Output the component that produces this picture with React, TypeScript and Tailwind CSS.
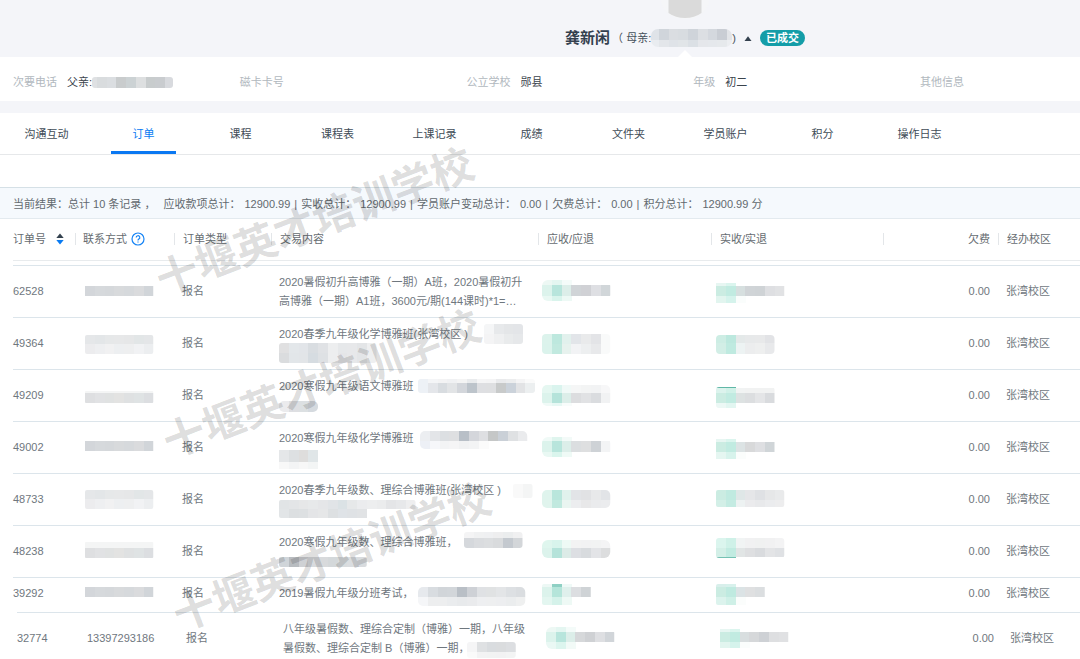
import { useId, useState } from "react";

type Strip = { y: number; h: number; c: string[]; x?: number };
type Block = { x: number; r?: number; strips: Strip[] };

const CELL = 9.75;

/* Pixelated cover that hides private details. */
function Mosaic({ block, w, h }: { block: Block; w: number; h: number }) {
  const id = useId();
  const top = Math.min(...block.strips.map((s) => s.y));
  const bottom = Math.max(...block.strips.map((s) => s.y + s.h));
  const cells = Math.max(...block.strips.map((s) => (s.x ?? 0) + s.c.length));
  return (
    <svg aria-hidden="true" width={w} height={h} className="pointer-events-none absolute top-0 left-0" shapeRendering="crispEdges">
      <clipPath id={id}>
        <rect x={block.x} y={top} width={cells * CELL} height={bottom - top} rx={block.r ?? 0} />
      </clipPath>
      <g clipPath={`url(#${id})`}>
        {block.strips.map((s, i) =>
          s.c.map((color, j) => (
            <rect key={`${i}-${j}`} x={block.x + ((s.x ?? 0) + j) * CELL} y={s.y} width={CELL + 0.3} height={s.h} fill={color} />
          )),
        )}
      </g>
    </svg>
  );
}

const PHONE_DARK = ["#d3d6da", "#d6d9dc", "#d5d8db", "#d8dadc", "#d6d9dc", "#dadbdd", "#d1d5d9"];
const PHONE_MID = ["#dedfe1", "#e1e2e4", "#e0e2e2", "#e3e3e2", "#dfe1e2", "#dfe3e4", "#dcdee1"];
const PHONE_TOP = ["#e5e7e9", "#e3e6e8", "#e6e8e9", "#e7e8e9", "#e6e7e8", "#e2e6e7", "#e4e6e8"];
const PHONE_LOW = ["#ececee", "#eeeff1", "#f1f1f2", "#edeff1", "#eeeff0", "#f1f2f4", "#eceef0"];

const dark = (y: number): Block => ({ x: 10, strips: [{ y, h: 10, c: PHONE_DARK }] });
const pair = (y: number): Block => ({
  x: 10,
  r: 2,
  strips: [
    { y, h: 9, c: PHONE_TOP },
    { y: y + 9, h: 10, c: PHONE_LOW },
  ],
});
const lowPhone = (y: number, h: number): Block => ({
  x: 10,
  r: 1,
  strips: [
    { y, h, c: Array(7).fill("#f4f5f5") },
    { y: y + h, h: 10, c: PHONE_MID },
  ],
});

type Order = {
  id: string;
  phone?: string;
  phoneCover?: Block;
  lines: string[];
  covers: Block[];
  due: Block;
  paid: Block;
  height: string;
};

const orders: Order[] = [
  {
    id: "62528",
    phoneCover: dark(20),
    lines: ["2020暑假初升高博雅（一期）A班，2020暑假初升", "高博雅（一期）A1班，3600元/期(144课时)*1=…"],
    covers: [],
    due: { x: 4, r: 6, strips: [
      { y: 14, h: 5, c: ["#edf8f4", "#e4f6f1", "#f4fbf9"] },
      { y: 19, h: 11, c: ["#dcf3ec", "#b8e5dc", "#dceee9", "#d0d4d7", "#d0d1d5", "#dedfe3", "#d1d6d9"] },
      { y: 30, h: 5, c: ["#e9f8f3", "#d9f4ec", "#edf9f5"] },
    ] },
    paid: { x: 5, strips: [
      { y: 17, h: 3, c: ["#e7f6f2", "#dbf5ee"] },
      { y: 20, h: 10, c: ["#cbece2", "#c1ebe1", "#d6dfdf", "#d0d4d7", "#cfd3d6", "#dedfe2", "#e1e2e4"] },
      { y: 30, h: 7, c: ["#e2f5ef", "#d5f3ec", "#fafdfc"] },
    ] },
    height: "h-[52px]",
  },
  {
    id: "49364",
    phoneCover: pair(17),
    lines: ["2020春季九年级化学博雅班(张湾校区 )"],
    covers: [
      { x: 213, r: 3, strips: [
        { y: 6, h: 10, c: ["#f5f6f7", "#e7e9eb", "#e4e6e8", "#e3e5e8"] },
        { y: 16, h: 10, c: ["#f4f4f5", "#eff0f1", "#e9ebec", "#e6e8ea"] },
      ] },
      { x: 8, r: 3, strips: [
        { y: 25, h: 10, c: ["#e0e0e1", "#e3e7ea", "#e2e5e9", "#d9dde1", "#e0e2e5", "#edeeef", "#e6e8ea", "#e7e8ea", "#e3e5e7", "#eeeff0"] },
        { y: 35, h: 10, c: ["#dadcde", "#e2e6e9", "#e2e5e8", "#d6dce1", "#dee1e4", "#edeeef", "#e5e6e8", "#e7e8ea", "#e3e5e7", "#eeeff0"] },
      ] },
    ],
    due: { x: 4, r: 4, strips: [
      { y: 16, h: 10, c: ["#dcf3ec", "#bde8de", "#e2f1ed", "#e2e5e9", "#e9eaeb", "#e3e4e7", "#f9fafa"] },
      { y: 26, h: 10, c: ["#dbf3ec", "#c1e9df", "#e7f2ee", "#f2f3f5", "#edeff0", "#e8e9eb", "#f9fafa"] },
    ] },
    paid: { x: 5, r: 4, strips: [
      { y: 17, h: 8, c: ["#cdede4", "#bce8de", "#e4e9e9", "#e7e9ea", "#e8e9ea", "#e2e3e6"] },
      { y: 25, h: 11, c: ["#d2eee6", "#bfeae0", "#edf3f3", "#ecedee", "#eeefef", "#e8e9eb"] },
    ] },
    height: "h-[52px]",
  },
  {
    id: "49209",
    phoneCover: lowPhone(21, 2),
    lines: ["2020寒假九年级语文博雅班"],
    covers: [
      { x: 147, r: 3, strips: [
        { y: 9, h: 4, c: ["#edf1f6", "#f4f5f7", "#f3f3f4", "#f0f1f3", "#f4f4f4", "#e9ebed", "#f5f5f6", "#f4f4f5", "#e9eaec", "#ecedee", "#f4f4f5", "#fafafa"] },
        { y: 13, h: 10, c: ["#edf1f6", "#e4e6ea", "#d8dce0", "#e2e4e6", "#d3d6db", "#bdc4cb", "#dedfe2", "#dedfe1", "#c8caca", "#cbd2da", "#e2e3e5", "#eceff0"] },
      ] },
      { x: 8, r: 5, strips: [{ y: 31, h: 11, c: ["#ebebed", "#dedfe2", "#dce0e2", "#d5dadf"] }] },
    ],
    due: { x: 4, r: 5, strips: [
      { y: 15, h: 8, c: ["#e5f7f1", "#daf4ee", "#f0f9f7", "#f5f6f6", "#f3f4f4", "#f2f3f4", "#f7f7f8"] },
      { y: 23, h: 10, c: ["#dcf3ec", "#b5e3da", "#dceee9", "#dcdddf", "#e1e2e4", "#dadcdf", "#f1f2f3"] },
      { y: 33, h: 3, c: ["#f0faf7", "#e7f8f4", "#f8fcfb"] },
    ] },
    paid: { x: 5, r: 3, strips: [
      { y: 17, h: 1, c: ["#60b7a7", "#60b7a7"] },
      { y: 18, h: 5, c: ["#dcf3ed", "#d1f1e8", "#f1f3f3", "#f1f2f2", "#f1f2f2", "#f1f2f2"] },
      { y: 23, h: 10, c: ["#cbece2", "#c1ebe1", "#dde2e2", "#dcdee0", "#e4e5e7", "#d9dbde"] },
      { y: 33, h: 5, c: ["#ecf8f5", "#e2f6f1"] },
    ] },
    height: "h-[52px]",
  },
  {
    id: "49002",
    phoneCover: dark(19),
    lines: ["2020寒假九年级化学博雅班"],
    covers: [
      { x: 149, r: 5, strips: [
        { y: 9, h: 10, c: ["#eceef1", "#e3e5e8", "#dcdfe2", "#dedfe1", "#b8bfc7", "#d4d6db", "#dedfe2", "#c5c7c7", "#cad0d7", "#dfe1e3", "#eaebed"] },
        { y: 19, h: 8, c: ["#edf0f6", "#f6f7fa", "#f3f4f5", "#f5f5f6", "#f1f2f3", "#f3f4f5", "#fbfbfb"] },
      ] },
      { x: 8, strips: [
        { y: 28, h: 12, c: ["#e5e7e9", "#dde0e2", "#dedddc", "#e0e6e8"] },
        { y: 40, h: 7, c: ["#f8f8f8", "#f3f4f5", "#f7f7f7", "#f3f5f5"] },
      ] },
    ],
    due: { x: 4, r: 6, strips: [
      { y: 15, h: 4, c: ["#f0faf7", "#dff5ee", "#f3faf8"] },
      { y: 19, h: 11, c: ["#dcf3ec", "#b8e5dc", "#dceee9", "#dbdee0", "#dedfe0", "#ced2d6", "#f3f4f5"] },
      { y: 30, h: 5, c: ["#e9f8f3", "#daf5ed", "#effaf6"] },
    ] },
    paid: { x: 5, strips: [
      { y: 17, h: 3, c: ["#e7f6f2", "#dbf5ee"] },
      { y: 20, h: 10, c: ["#cbece2", "#c1ebe1", "#dce3e4", "#d8d9da", "#dedfe2", "#d0d5d8"] },
      { y: 30, h: 7, c: ["#e5f6f1", "#d7f3ec", "#fbfdfc"] },
    ] },
    height: "h-[52px]",
  },
  {
    id: "48733",
    phoneCover: pair(16),
    lines: ["2020春季九年级数、理综合博雅班(张湾校区 )"],
    covers: [
      { x: 242, r: 2, strips: [{ y: 10, h: 14, c: ["#f9f9f9", "#f4f5f5"] }] },
      { x: 8, r: 2, strips: [
        { y: 26, h: 9, c: ["#e1e4e6", "#e3e5e7", "#e6e7e8", "#e7e9ea", "#e5e6e8", "#e1e4e7", "#dbe2e5", "#e6e8e9", "#ebecee", "#edeeef", "#ebeced", "#e4e5e7", "#e7e8ea", "#eeeeef"] },
        { y: 35, h: 9, c: ["#e2e5e7", "#dcdfe1", "#dde0e2", "#e4e5e7", "#e6e7e8", "#dde0e2", "#dfe3e7", "#dfe2e5", "#e1e3e5"] },
      ] },
    ],
    due: { x: 4, r: 5, strips: [
      { y: 16, h: 10, c: ["#dff4ed", "#b9e6dc", "#e1f2ed", "#e2e4e7", "#e1e2e4", "#e8e9ea", "#e2e4e7"] },
      { y: 26, h: 8, c: ["#e0f4ed", "#c1e9df", "#eaf5f1", "#ecedef", "#e8e8e9", "#eaebed", "#ebecee"] },
    ] },
    paid: { x: 5, r: 2, strips: [
      { y: 16, h: 10, c: ["#cbece2", "#c0eae0", "#dfe7e7", "#e5e6e8", "#dfe1e4", "#e6e7e8", "#e9eaeb"] },
      { y: 26, h: 7, c: ["#d3efe7", "#c4ebe2", "#edf2f2", "#ebebed", "#e8e9eb", "#ebecee", "#ededee"] },
    ] },
    height: "h-[52px]",
  },
  {
    id: "48238",
    phoneCover: lowPhone(16, 6),
    lines: ["2020寒假九年级数、理综合博雅班，"],
    covers: [
      { x: 193, r: 3, strips: [
        { y: 6, h: 6, c: ["#f4f4f5", "#f0f1f2", "#eff0f2", "#eeeeef", "#ebedee", "#f0f0f1"] },
        { y: 12, h: 10, c: ["#d5d8dc", "#dadcdf", "#dcdee0", "#d9dbdd", "#c4c9cf", "#d3d6d9"] },
      ] },
      { x: 8, r: 2, strips: [
        { y: 31, h: 10, c: ["#d0d5d9", "#b8bcc0", "#cfd1d4", "#d8dbde", "#d8dadc", "#d4d8da", "#d9dcde", "#dadde0", "#d8dbde"] },
      ] },
    ],
    due: { x: 4, r: 6, strips: [
      { y: 14, h: 8, c: ["#dff6ee", "#d8f4ec", "#eefaf5", "#f3f3f3", "#f2f2f3", "#f2f3f3", "#f4f4f5"] },
      { y: 22, h: 10, c: ["#dcf3ec", "#b5e3da", "#dcebe7", "#dddfe3", "#d8dbde", "#e3e4e7", "#dcddde"] },
    ] },
    paid: { x: 5, r: 3, strips: [
      { y: 12, h: 10, c: ["#dbf5ee", "#cff1e8", "#f1f4f4", "#f1f1f2", "#f0f1f1", "#f1f1f2", "#f3f3f4"] },
      { y: 22, h: 9, c: ["#d3efe7", "#c1ebe1", "#e1e5e5", "#dedfe1", "#d9dbde", "#e3e4e6", "#dfe1e4"] },
      { y: 31, h: 1, c: ["#75c1b3", "#75c1b3"] },
    ] },
    height: "h-[52px]",
  },
  {
    id: "39292",
    phoneCover: dark(9),
    lines: ["2019暑假九年级分班考试，"],
    covers: [
      { x: 147, r: 5, strips: [
        { y: 9, h: 10, c: ["#e6e9ed", "#d8dce0", "#d1d5d9", "#d2d6da", "#b9bfc6", "#ced1d6", "#dfe1e4", "#e0e2e3", "#e3e5e7", "#dde0e3", "#dadde0"] },
        { y: 19, h: 9, c: ["#f5f6f8", "#edeeef", "#edeeef", "#eaecee", "#e8eaec", "#eaebed", "#eeeff1", "#eeeff0", "#edeef0", "#ebedee", "#eff0f0"] },
      ] },
    ],
    due: { x: 4, r: 2, strips: [
      { y: 6, h: 3, c: ["#edf8f5", "#8fd0c4", "#eff9f7"] },
      { y: 9, h: 10, c: ["#dcf3ec", "#b5e5da", "#dff0ec", "#dcdee1", "#cfd3d6"] },
      { y: 19, h: 8, c: ["#e3f6f0", "#d5f2ea", "#eef9f5"] },
    ] },
    paid: { x: 5, r: 2, strips: [
      { y: 6, h: 3, c: ["#d8efeb", "#d8f1ec"] },
      { y: 9, h: 10, c: ["#cbece2", "#bfeae0", "#dbe3e5", "#dfe0e1", "#dbdee0"] },
      { y: 19, h: 8, c: ["#dcf3ed", "#cff0e7", "#fbfdfc"] },
    ] },
    height: "h-[35px] pb-1",
  },
];

const lastOrder: Order = {
  id: "32774",
  phone: "13397293186",
  lines: ["八年级暑假数、理综合定制（博雅）一期，八年级", "暑假数、理综合定制 B（博雅）一期，"],
  covers: [
    { x: 192, r: 3, strips: [
      { y: 29, h: 10, c: ["#f5f5f6", "#dfe1e3", "#d9dcdf", "#dadcde", "#dcdee1"] },
      { y: 39, h: 6, c: ["#fafafa", "#f3f3f4", "#f2f3f3", "#f2f2f3", "#f3f4f4"] },
    ] },
  ],
  due: { x: 4, r: 6, strips: [
    { y: 14, h: 5, c: ["#edf8f4", "#e4f6f1", "#f4fbf9"] },
    { y: 19, h: 10, c: ["#dcf3ec", "#b8e5dc", "#dceee9", "#d6d8da", "#cfd1d4", "#dedfe2", "#d1d5d9"] },
    { y: 29, h: 7, c: ["#eaf8f4", "#dcf5ee", "#f2faf7"] },
  ] },
  paid: { x: 5, strips: [
    { y: 16, h: 3, c: ["#e7f6f2", "#dbf5ee"] },
    { y: 19, h: 10, c: ["#cbece2", "#c1ebe1", "#d8dedf", "#d6d8da", "#ced1d5", "#dedfe1", "#e0e1e3"] },
    { y: 29, h: 6, c: ["#e2f5ef", "#d5f3ec", "#fafdfc"] },
  ] },
  height: "h-[51px]",
};

function Columns() {
  return (
    <colgroup>
      <col className="w-[62px]" />
      <col className="w-[99px]" />
      <col className="w-[97px]" />
      <col />
      <col className="w-[173px]" />
      <col className="w-[172px]" />
      <col className="w-[115px]" />
      <col className="w-[82px]" />
    </colgroup>
  );
}

function OrderRow({ order, last = false }: { order: Order; last?: boolean }) {
  const cell = order.height;
  return (
    <tr className={last ? "border-t border-[#dce5eb]" : "border-b border-[#dce5eb] last:border-b-0"}>
      <td className={cell}>{order.id}</td>
      <td className={`relative pl-2 ${cell}`}>
        {order.phone}
        {order.phoneCover && <Mosaic block={order.phoneCover} w={90} h={50} />}
      </td>
      <td className={`pl-2 ${cell}`}>报名</td>
      <td className={`relative pl-2 leading-[19px] whitespace-nowrap ${cell}`}>
        <div className="pt-0.5">
          {order.lines.map((line) => (
            <div key={line}>{line}</div>
          ))}
          {order.lines.length === 1 && order.covers.length > 1 && <div>&nbsp;</div>}
        </div>
        {order.covers.map((block, i) => (
          <Mosaic key={i} block={block} w={266} h={50} />
        ))}
      </td>
      <td className="relative">
        <Mosaic block={order.due} w={100} h={50} />
      </td>
      <td className="relative">
        <Mosaic block={order.paid} w={100} h={50} />
      </td>
      <td className={`pr-2 text-right ${cell}`}>0.00</td>
      <td className={`pl-2 ${cell}`}>张湾校区</td>
    </tr>
  );
}

const tabs = ["沟通互动", "订单", "课程", "课程表", "上课记录", "成绩", "文件夹", "学员账户", "积分", "操作日志"];

const totals = [
  ["应收款项总计：", "12900.99"],
  ["实收总计：", "12900.99"],
  ["学员账户变动总计：", "0.00"],
  ["欠费总计：", "0.00"],
  ["积分总计：", "12900.99 分"],
];

const info = [
  ["次要电话", "父亲:"],
  ["磁卡卡号", ""],
  ["公立学校", "郧县"],
  ["年级", "初二"],
  ["其他信息", ""],
];

const watermarks = ["top-[193px] left-[147px]", "top-[355px] left-[154px]", "top-[528px] left-[164px]"];

function Divider() {
  return <span className="absolute top-3.5 left-0 h-3 w-px bg-[#e3e6e9]" />;
}

export default function App() {
  const [tab, setTab] = useState("订单");
  return (
    <div className="relative min-h-screen overflow-hidden bg-white font-['Liberation_Sans','Noto_Sans_CJK_SC',sans-serif] text-[11px] leading-4 text-[#6f777e]">
      <header className="flex h-[57px] flex-col items-center bg-[#f4f5f9] pl-[290px]">
        <svg aria-hidden="true" width="52" height="20" viewBox="0 0 52 20">
          <path d="M2 0a24 19 0 0 0 48 0z" fill="#f5f6f8" />
          <path d="M9.500 0h33v13q-7 5-16.500 5t-16.500-5z" fill="#dadada" />
        </svg>
        <div className="mt-2 flex h-5 items-center whitespace-nowrap text-[#46515c]">
          <h1 className="text-[15px] font-bold text-[#33404e]">龚新闲</h1>
          <span className="pl-0.5">（ 母亲:</span>
          <svg aria-hidden="true" width="81" height="18" className="shrink-0" shapeRendering="crispEdges">
            <clipPath id="parent">
              <rect width="81" height="18" rx="7" />
            </clipPath>
            <g clipPath="url(#parent)">
              {["#dfe3e8", "#d0d5db", "#dadde1", "#d8dce0", "#cfd4da", "#dcdfe3", "#d4d8de", "#c9cdd4", "#e2e4e8"].map((c, i) => (
                <rect key={i} x={i * 9.75 - 2} width="10" height="11" fill={c} />
              ))}
              {["#e9ecf0", "#e3e6ea", "#dfe3e8", "#e1e5e8", "#dbe0e5", "#e5e7eb", "#e5e8ec", "#e6e9ec", "#eceef1"].map((c, i) => (
                <rect key={i} x={i * 9.75 - 2} y="11" width="10" height="7" fill={c} />
              ))}
            </g>
          </svg>
          <span>)</span>
          <button type="button" aria-label="收起" className="ml-2 flex">
            <svg width="8" height="5" viewBox="0 0 8 5">
              <path d="M0.500 5 4 0.300 7.500 5z" fill="#33404e" />
            </svg>
          </button>
          <span className="ml-2 flex h-4 items-center rounded-full bg-[#149da8] px-1.5 font-bold text-white">已成交</span>
        </div>
        <svg aria-hidden="true" width="14" height="7" viewBox="0 0 14 7" className="mt-auto shrink-0">
          <path d="M0 7 7 0l7 7z" fill="#fff" />
        </svg>
      </header>

      <section className="flex h-11 items-center pt-1.5 pl-[13px] whitespace-nowrap">
        {info.map(([label, value], i) => (
          <div key={label} className="flex w-[21.25%] shrink-0 items-center gap-2.5">
            <span className="text-[#b1b8be]">{label}</span>
            <span className="flex items-center text-[#3a434c]">
              {value}
              {i === 0 && (
                <svg aria-hidden="true" width="81" height="11" shapeRendering="crispEdges">
                  <clipPath id="father">
                    <rect width="81" height="11" rx="3" />
                  </clipPath>
                  <g clipPath="url(#father)">
                    {["#dfe1e3", "#d9dcde", "#dbdee1", "#c9cccd", "#ccd2d4", "#dddfe0", "#c8cccd", "#c9cccf", "#d8dade"].map((c, j) => (
                      <rect key={j} x={j * 9.75 - 5} width="10" height="11" fill={c} />
                    ))}
                  </g>
                </svg>
              )}
            </span>
          </div>
        ))}
      </section>

      <div className="h-3 bg-[#f4f5f9]" />

      <nav className="flex h-[42px] border-b border-[#e6e8ea]">
        <div className="-ml-0.5 flex">
          {tabs.map((name) => (
            <button
              key={name}
              type="button"
              onClick={() => setTab(name)}
              className={`flex w-[97px] flex-col items-center justify-between pt-[13px] ${name === tab ? "text-[#0a7bf2]" : "text-[#414c57]"}`}
            >
              {name}
              <span className={`h-[3px] w-[65px] ${name === tab ? "bg-[#0a78f2]" : ""}`} />
            </button>
          ))}
        </div>
      </nav>

      <div className="mt-8 flex h-8 items-center gap-1 border-t border-b border-t-[#d5e0e6] border-b-[#e3eaef] bg-[#f5f9fd] pt-0.5 pl-[13px] whitespace-nowrap text-[#62696f]">
        <span className="pr-1">当前结果：总计 10 条记录 ，</span>
        {totals.map(([label, value], i) => (
          <span key={label} className="flex gap-1">
            {i > 0 && <span>|</span>}
            <span>{label}</span>
            <span>{value}</span>
          </span>
        ))}
      </div>

      <main className="pl-[13px]">
        <table className="w-full table-fixed border-collapse text-left">
          <Columns />
          <thead className="text-[#666c71]">
            <tr className="border-b border-[#e8ebed]">
              <th className="h-[41px] p-0 font-normal">
                <span className="flex items-center gap-1.5">
                  订单号
                  <button type="button" aria-label="排序" className="pl-1">
                    <svg width="8" height="12" viewBox="0 0 8 12">
                      <path d="M0.300 5 4 0.500l3.700 4.500z" fill="#34424f" />
                      <path d="M0.300 7h7.400L4 11.500z" fill="#0a7bf2" />
                    </svg>
                  </button>
                </span>
              </th>
              <th className="relative p-0 pl-2 font-normal">
                <Divider />
                <span className="flex items-center gap-1">
                  联系方式
                  <svg width="14" height="14" viewBox="0 0 14 14" fill="none" stroke="#1684f5" role="img" aria-label="帮助">
                    <circle cx="7" cy="7" r="6" strokeWidth="1.200" />
                    <path d="M5.200 5.600a1.800 1.800 0 1 1 2.700 1.500c-.6.400-.9.600-.9 1.300M7 9.500v1.100" strokeWidth="1.200" />
                  </svg>
                </span>
              </th>
              <th className="relative p-0 pl-[9px] font-normal"><Divider />订单类型</th>
              <th className="relative p-0 pl-[9px] font-normal"><Divider />交易内容</th>
              <th className="relative p-0 pl-[9px] font-normal"><Divider />应收/应退</th>
              <th className="relative p-0 pl-[9px] font-normal"><Divider />实收/实退</th>
              <th className="relative p-0 pr-2 text-right font-normal"><Divider />欠费</th>
              <th className="relative p-0 pl-[9px] font-normal"><Divider />经办校区</th>
            </tr>
          </thead>
        </table>
        <table className="mt-1 w-full table-fixed border-collapse border-t border-[#dce5eb] text-left">
          <Columns />
          <tbody>
            {orders.map((order) => (
              <OrderRow key={order.id} order={order} />
            ))}
          </tbody>
        </table>
        <div className="-mr-1 pl-1">
          <table className="w-full table-fixed border-collapse text-left">
            <Columns />
            <tbody>
              <OrderRow order={lastOrder} last />
            </tbody>
          </table>
        </div>
      </main>

      {watermarks.map((place) => (
        <div
          key={place}
          aria-hidden="true"
          className={`pointer-events-none absolute ${place} -rotate-21 text-[42px] leading-[60px] font-bold whitespace-nowrap text-black/14 select-none`}
        >
          十堰英才培训学校
        </div>
      ))}
    </div>
  );
}
